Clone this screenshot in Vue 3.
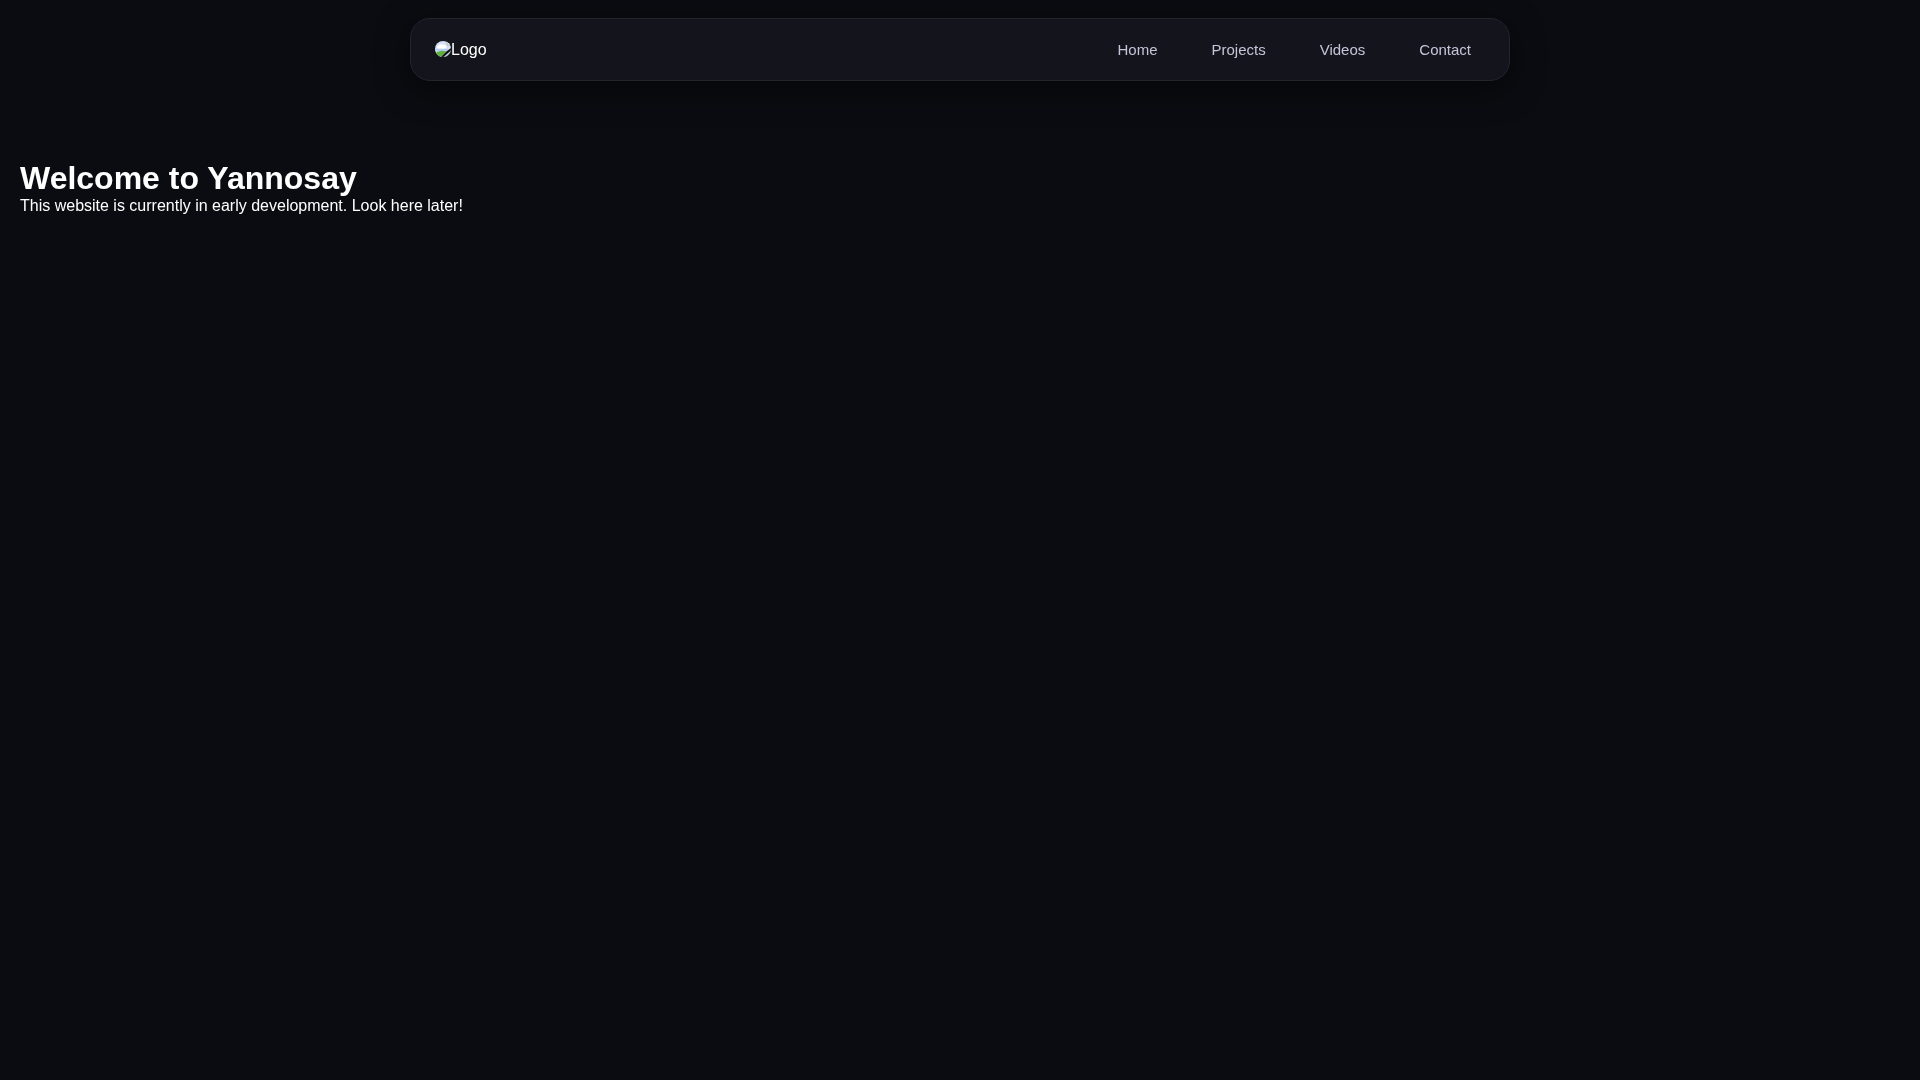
<script setup>
const links = ['Home', 'Projects', 'Videos', 'Contact']
</script>

<template>
  <div class="page">
    <header class="nav">
      <a class="logo">
        <svg class="broken" width="16" height="16" viewBox="0 0 16 16">
          <rect width="16" height="16" fill="#d3e0f7" />
          <path d="M0 8H13V10H0Z" fill="#b7ccf0" />
          <path d="M2 6.500C2 4.500 5 2.500 7.500 3.500C10 3 12 4.500 11.500 6.500L9.500 7.500H3.500Z" fill="#fff" />
          <path d="M0 16V12.500C3 10 7 9 11.500 10.500L6 16Z" fill="#5fb23f" />
          <path d="M11.500 10.500L16 7V9.500L8.500 16H6Z" fill="#0c0c0c" />
          <path d="M16 10.500V16H10Z" fill="#86a582" />
          <path d="M12 0H16V4H12Z" fill="#ececec" />
          <path d="M12 0V4H16" fill="none" stroke="#a8a8a8" stroke-width="0.800" />
        </svg>
        <span>Logo</span>
      </a>
      <nav class="links">
        <a v-for="link in links" :key="link" class="link">{{ link }}</a>
      </nav>
    </header>
    <main class="main">
      <h1 class="title">Welcome to Yannosay</h1>
      <p class="lead">This website is currently in early development. Look here later!</p>
    </main>
  </div>
</template>

<style>
html, body { margin: 0; background: #0a0c11; }
</style>

<style scoped>
.page {
  min-height: 1080px;
  background: #0a0c11;
  color: #fff;
  font-family: "Liberation Sans", Arial, sans-serif;
  padding-top: 18px;
  box-sizing: border-box;
}
.nav {
  box-sizing: border-box;
  width: 1100px;
  height: 63px;
  margin: 0 auto;
  padding: 0 24px;
  display: flex;
  align-items: center;
  justify-content: space-between;
  background: #13141c;
  border: 1px solid #24252c;
  border-radius: 20px;
  box-shadow: 0 8px 32px rgba(0, 0, 0, 0.5);
  will-change: transform;
}
.logo {
  display: flex;
  align-items: center;
  font-size: 16px;
  color: #fff;
}
.broken {
  border-radius: 50%;
  display: block;
  margin-bottom: 1px;
}
.links {
  display: flex;
  gap: 26px;
}
.link {
  padding: 8px 14px;
  font-size: 15px;
  color: #c4c5d9;
}
.main {
  padding: 79px 20px 0;
  will-change: transform;
}
.title {
  margin: 0;
  font-size: 32px;
  font-weight: 700;
  line-height: 37px;
}
.lead {
  margin: 0;
  font-size: 16px;
  line-height: 18px;
  color: #fff;
}
</style>
